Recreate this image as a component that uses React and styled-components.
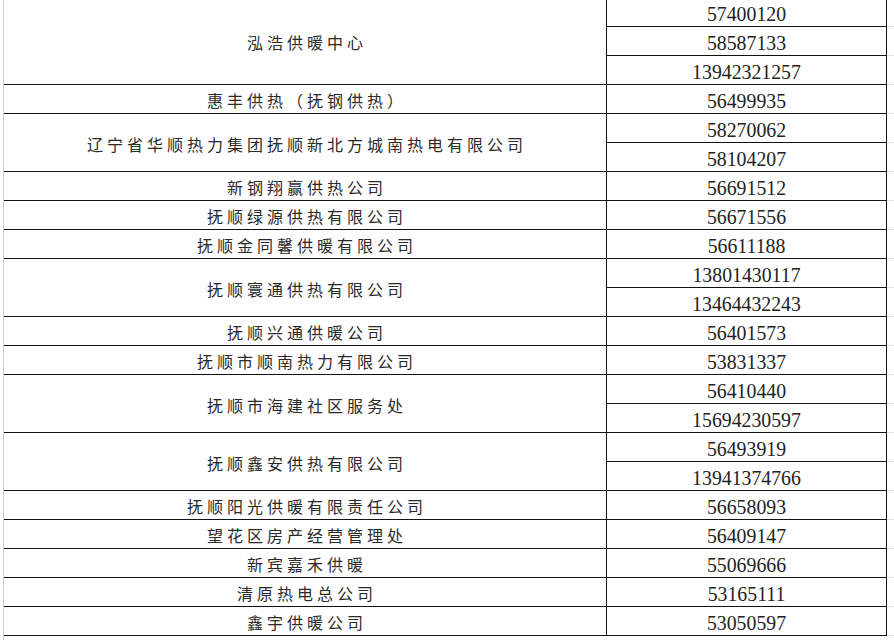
import React from 'react';
import styled, { createGlobalStyle } from 'styled-components';

const GlobalStyle = createGlobalStyle`
  html, body {
    margin: 0;
    padding: 0;
    background: #fff;
    overflow: hidden;
  }
`;

const Page = styled.div`
  height: 100vh;
  padding-left: 3px;
  background: #fff;
`;

const Sheet = styled.div`
  height: 100%;
  border-left: 1px solid #d4d4d4;
`;

const Table = styled.div`
  display: grid;
  grid-template-columns: 603px 280px 1fr;
  grid-auto-rows: 29px;
  margin-top: -2px;
`;

const NameCell = styled.div`
  grid-column: 1;
  grid-row: span ${p => p.$span || 1};
  display: flex;
  align-items: center;
  justify-content: center;
  box-sizing: border-box;
  padding: 2px 0 0 4px;
  border-right: 1px solid #111;
  border-bottom: 1px solid #111;
  font-family: "Noto Sans CJK SC", "Noto Sans", sans-serif;
  font-size: 16px;
  letter-spacing: 4px;
  color: #2a2a2a;
  white-space: nowrap;
`;

const PhoneCell = styled.div`
  grid-column: 2;
  display: flex;
  align-items: center;
  justify-content: center;
  box-sizing: border-box;
  padding-top: 3px;
  border-right: 1px solid #111;
  border-bottom: 1px solid #111;
  font-family: "Liberation Serif", "Times New Roman", serif;
  font-size: 19.8px;
  color: #222;
`;

const Digits = styled.span`
  display: inline-block;
  transform: scaleY(1.08);
`;

const Filler = styled.div`
  grid-column: 3;
  box-sizing: border-box;
  border-bottom: 1px solid #e2e2e2;
`;

const data = [
  { name: '泓浩供暖中心', phones: ['57400120', '58587133', '13942321257'] },
  { name: '惠丰供热（抚钢供热）', phones: ['56499935'] },
  { name: '辽宁省华顺热力集团抚顺新北方城南热电有限公司', phones: ['58270062', '58104207'] },
  { name: '新钢翔赢供热公司', phones: ['56691512'] },
  { name: '抚顺绿源供热有限公司', phones: ['56671556'] },
  { name: '抚顺金同馨供暖有限公司', phones: ['56611188'] },
  { name: '抚顺寰通供热有限公司', phones: ['13801430117', '13464432243'] },
  { name: '抚顺兴通供暖公司', phones: ['56401573'] },
  { name: '抚顺市顺南热力有限公司', phones: ['53831337'] },
  { name: '抚顺市海建社区服务处', phones: ['56410440', '15694230597'] },
  { name: '抚顺鑫安供热有限公司', phones: ['56493919', '13941374766'] },
  { name: '抚顺阳光供暖有限责任公司', phones: ['56658093'] },
  { name: '望花区房产经营管理处', phones: ['56409147'] },
  { name: '新宾嘉禾供暖', phones: ['55069666'] },
  { name: '清原热电总公司', phones: ['53165111'] },
  { name: '鑫宇供暖公司', phones: ['53050597'] },
];

export default function App() {
  return (
    <Page>
      <GlobalStyle />
      <Sheet>
        <Table>
          {data.map(item => (
            <React.Fragment key={item.name}>
              <NameCell $span={item.phones.length}>{item.name}</NameCell>
              {item.phones.map(phone => (
                <React.Fragment key={phone}>
                  <PhoneCell><Digits>{phone}</Digits></PhoneCell>
                  <Filler />
                </React.Fragment>
              ))}
            </React.Fragment>
          ))}
        </Table>
      </Sheet>
    </Page>
  );
}
